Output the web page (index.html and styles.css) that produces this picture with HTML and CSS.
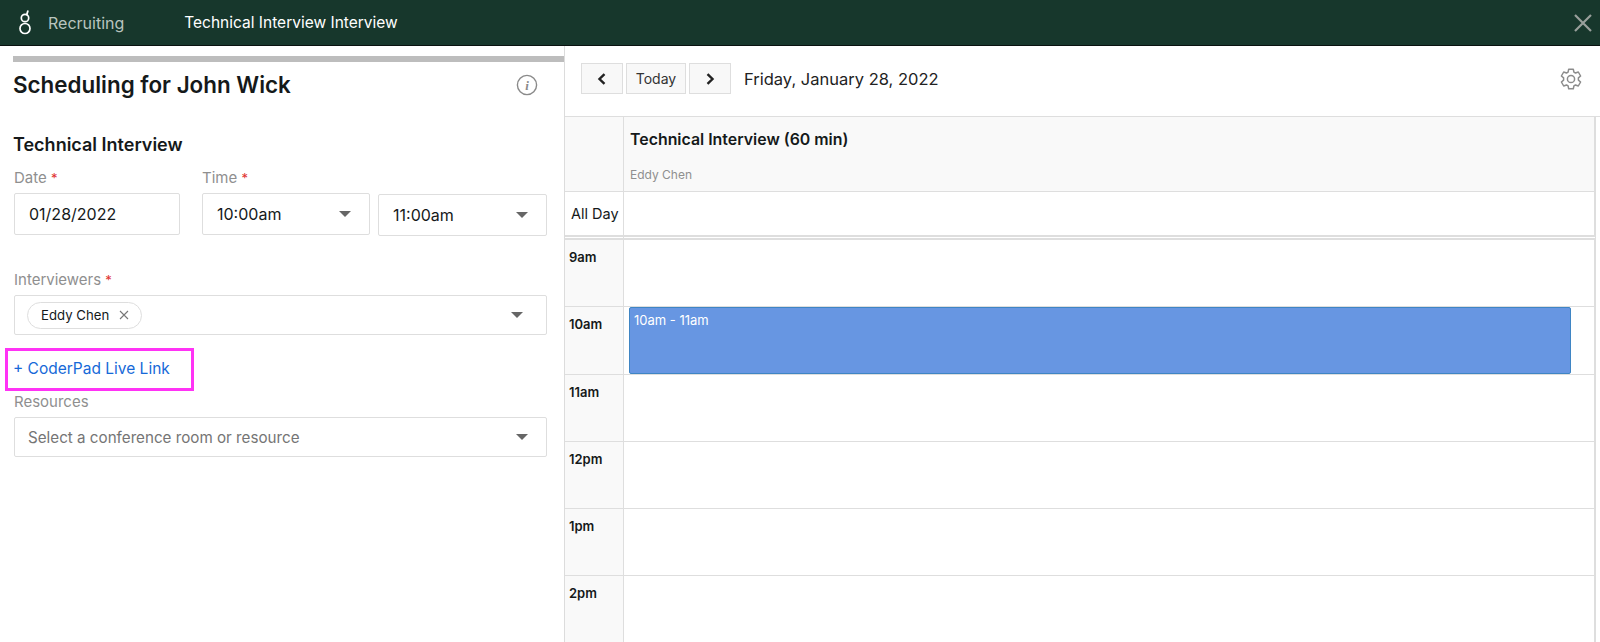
FILE: index.html
```html
<!DOCTYPE html>
<html lang="en">
<head>
<meta charset="utf-8">
<title>Technical Interview Interview</title>
<link rel="stylesheet" href="styles.css">
</head>
<body>
<header class="topbar">
  <svg class="logo" width="16" height="26" viewBox="0 0 16 26" aria-hidden="true"><circle cx="8" cy="8" r="3.700" fill="none" stroke="#fff" stroke-width="1.700"/><circle cx="8" cy="18.500" r="5" fill="none" stroke="#fff" stroke-width="1.700"/><path d="M9.800 4.500L10.800 1.200" fill="none" stroke="#fff" stroke-width="1.800" stroke-linecap="round"/></svg>
  <span class="brand">Recruiting</span>
  <span class="page-title">Technical Interview Interview</span>
  <svg class="close" width="20" height="20" viewBox="0 0 20 20" aria-hidden="true"><path d="M2 2l16 16M18 2L2 18" stroke="#999f9c" stroke-width="2.200" fill="none"/></svg>
</header>
<main class="layout">
  <section class="panel">
    <div class="progress"></div>
    <div class="title-row">
      <h1>Scheduling for John Wick</h1>
      <svg class="info" width="22" height="22" viewBox="0 0 22 22" aria-hidden="true"><circle cx="11" cy="11" r="9.600" fill="none" stroke="#8a8a8a" stroke-width="1.400"/><text x="11" y="15.500" text-anchor="middle" class="info-i">i</text></svg>
    </div>
    <h2>Technical Interview</h2>
    <div class="time-grid">
      <div class="field date-field">
        <label>Date <span class="req">*</span></label>
        <div class="box">01/28/2022</div>
      </div>
      <div class="field time-field">
        <label>Time <span class="req">*</span></label>
        <div class="box select">10:00am<i class="caret"></i></div>
      </div>
      <div class="field end-field">
        <div class="box select">11:00am<i class="caret"></i></div>
      </div>
    </div>
    <div class="field interviewers">
      <label>Interviewers <span class="req">*</span></label>
      <div class="box select wide">
        <span class="chip">Eddy Chen
          <svg width="10" height="10" viewBox="0 0 10 10" aria-hidden="true"><path d="M1 1l8 8M9 1L1 9" stroke="#777" stroke-width="1.100"/></svg>
        </span>
        <i class="caret caret-left"></i>
      </div>
    </div>
    <a class="add-link" href="#">+ CoderPad Live Link</a>
    <div class="field resources">
      <label>Resources</label>
      <div class="box select wide placeholder">Select a conference room or resource<i class="caret"></i></div>
    </div>
  </section>
  <section class="calendar">
    <div class="toolbar">
      <button class="nav" aria-label="Previous"><svg width="12" height="12" viewBox="0 0 12 12"><path d="M8.500 1.200L3.500 6l5 4.800" fill="none" stroke="#222" stroke-width="2.400"/></svg></button>
      <button class="today">Today</button>
      <button class="nav" aria-label="Next"><svg width="12" height="12" viewBox="0 0 12 12"><path d="M3.500 1.200L8.500 6l-5 4.800" fill="none" stroke="#222" stroke-width="2.400"/></svg></button>
      <span class="cal-date">Friday, January 28, 2022</span>
      <svg class="gear" width="24" height="24" viewBox="0 0 24 24" aria-hidden="true"><path d="M9.700 2.200h4.600l.6 2.900 1.600.9 2.800-1 2.300 4-2.200 1.900v2.200l2.200 1.900-2.300 4-2.800-1-1.600.9-.6 2.900H9.700l-.6-2.900-1.600-.9-2.800 1-2.300-4 2.200-1.900v-2.200L2.400 9l2.300-4 2.800 1 1.600-.9z" fill="none" stroke="#8c8c8c" stroke-width="1.500" stroke-linejoin="round"/><circle cx="12" cy="12" r="3.600" fill="none" stroke="#8c8c8c" stroke-width="1.500"/></svg>
    </div>
    <div class="grid">
      <div class="head-gutter"></div>
      <div class="head-cell">
        <strong>Technical Interview (60 min)</strong>
        <small>Eddy Chen</small>
      </div>
      <div class="allday-label">All Day</div>
      <div class="allday-cell"></div>
      <div class="hour-label">9am</div><div class="hour-cell"></div>
      <div class="hour-label">10am</div>
      <div class="hour-cell"><div class="event">10am - 11am</div></div>
      <div class="hour-label">11am</div><div class="hour-cell"></div>
      <div class="hour-label">12pm</div><div class="hour-cell"></div>
      <div class="hour-label">1pm</div><div class="hour-cell"></div>
      <div class="hour-label">2pm</div><div class="hour-cell"></div>
    </div>
  </section>
</main>
</body>
</html>
```
FILE: styles.css
```css
* { box-sizing: border-box; }
html, body { margin: 0; height: 642px; overflow: hidden; }
body { font-family: Inter, "Liberation Sans", sans-serif; color: #15191a; background: #fff; }

.topbar { height: 46px; background: #17372c; border-bottom: 1px solid #0a1210; display: flex; align-items: center; padding: 0 7px 0 17px; }
.logo { margin-right: 15px; }
.brand { font-size: 16px; color: #b9c4bf; margin-right: 60px; }
.page-title { font-size: 15.500px; color: #fff; }
.close { margin-left: auto; }

.layout { display: flex; height: 596px; }
.panel { width: 565px; flex: none; border-right: 1px solid #dcdcdc; padding: 10px 0 0 14px; }
.progress { height: 6px; margin-left: -1px; background: #bdbdbd; }
.title-row { display: flex; align-items: center; justify-content: space-between; height: 46px; padding-right: 26px; }
h1 { margin: 0; font-size: 22.400px; line-height: 30px; font-weight: 600; margin-left: -1px; }
.info-i { font: italic 600 13px "Liberation Serif", serif; fill: #8a8a8a; }
h2 { margin: 25px 0 0 -1px; font-size: 18px; line-height: 24px; font-weight: 600; }

.field label { display: block; font-size: 15px; line-height: 20px; color: #8f8f8f; margin-bottom: 5px; }
.req { color: #e0312f; font-size: 13px; }
.time-grid { display: flex; align-items: flex-start; margin-top: 11px; padding-right: 17px; }
.date-field { width: 166px; margin-right: 22px; }
.time-field { width: 168px; margin-right: 8px; }
.end-field { flex: 1; margin-top: 26px; }
.box { height: 42px; border: 1px solid #dedede; border-radius: 2px; display: flex; align-items: center; font-size: 16px; padding: 0 14px; background: #fff; }
.select { justify-content: space-between; }
.caret { width: 0; height: 0; border-left: 6px solid transparent; border-right: 6px solid transparent; border-top: 6px solid #666; flex: none; margin-right: 4px; }
.caret-left { margin-right: 9px; }
.interviewers { margin: 34px 17px 0 0; }
.wide { height: 40px; padding-left: 13px; }
.interviewers .wide { padding-left: 12px; }
.chip { height: 27px; border: 1px solid #dedede; border-radius: 14px; display: inline-flex; align-items: center; gap: 10px; padding: 0 12px 0 13px; font-size: 13.200px; }
.add-link { display: block; width: 189px; height: 43px; margin: 13px 0 1px -9px; border: 3px solid #ff33f5; padding-left: 5px; font-size: 15.500px; line-height: 36px; color: #1669d8; text-decoration: none; }
.resources { margin-right: 17px; }
.placeholder { color: #757575; font-size: 15.200px; }

.calendar { flex: 1; min-width: 0; }
.toolbar { height: 70px; display: flex; align-items: center; padding: 0 17px 5px 16px; gap: 3px; }
.toolbar button { height: 31px; background: #f8f8f8; border: 1px solid #dedede; padding: 0; display: inline-flex; align-items: center; justify-content: center; font-family: inherit; color: #333; font-size: 14px; }
.nav { width: 42px; }
.today { width: 60px; }
.cal-date { font-size: 16.500px; margin-left: 10px; color: #222; }
.gear { margin-left: auto; }

.grid { display: grid; grid-template-columns: 59px 972px; grid-template-rows: 75px 48px; grid-auto-rows: 67.300px; border-top: 1px solid #dedede; }
.head-gutter, .head-cell { height: 75px; background: #f9f9f9; border-bottom: 1px solid #dedede; }
.head-gutter, .allday-label, .hour-label { border-right: 1px solid #dedede; background: #f9f9f9; }
.head-cell { padding: 12px 6px; display: flex; flex-direction: column; border-right: 2px solid #dedede; }
.head-cell strong { font-size: 15.900px; font-weight: 600; line-height: 22px; }
.head-cell small { font-size: 12px; color: #8f8f8f; margin-top: 16px; line-height: 16px; }
.allday-label, .allday-cell { border-bottom: 5px double #dedede; }
.allday-label { font-size: 14.500px; display: flex; align-items: center; padding-left: 6px; background: #fff; white-space: nowrap; }
.allday-cell { border-right: 2px solid #dedede; }
.hour-label { border-bottom: 1px solid #dedede; font-size: 13px; font-weight: 600; padding: 9px 0 0 4px; }
.hour-cell { border-bottom: 1px solid #dedede; border-right: 2px solid #dedede; padding: 0 23px 0 5px; }
.event { height: 67px; background: #6796e2; border: 1px solid #3f85c4; border-radius: 2px; color: #fff; font-size: 13px; padding: 4px; }
```
